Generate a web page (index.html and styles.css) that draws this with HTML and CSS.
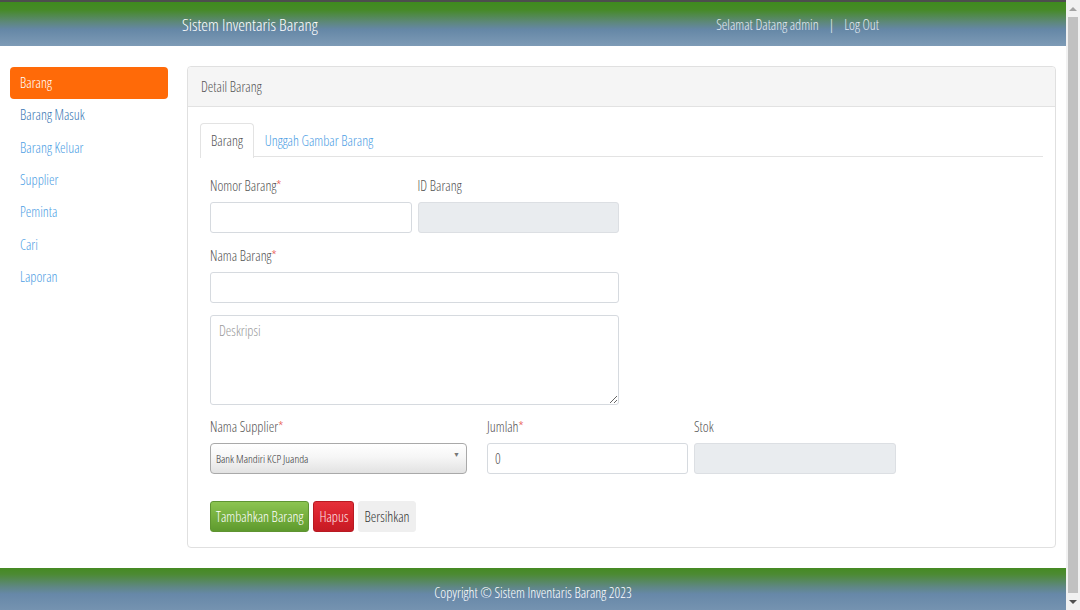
FILE: index.html
```html
<!DOCTYPE html>
<html lang="id">
<head>
<meta charset="utf-8">
<title>Sistem Inventaris Barang</title>
<link rel="stylesheet" href="styles.css">
</head>
<body>
<div class="page">
  <header class="navbar">
    <div class="nav-inner">
      <span class="brand">Sistem Inventaris Barang</span>
      <div class="nav-right">
        <span>Selamat Datang admin</span>
        <span class="sep">|</span>
        <a class="logout">Log Out</a>
      </div>
    </div>
  </header>

  <main class="main">
    <nav class="sidebar">
      <a class="side-item active">Barang</a>
      <a class="side-item hover">Barang Masuk</a>
      <a class="side-item">Barang Keluar</a>
      <a class="side-item">Supplier</a>
      <a class="side-item">Peminta</a>
      <a class="side-item">Cari</a>
      <a class="side-item">Laporan</a>
    </nav>

    <section class="panel">
      <div class="panel-head">Detail Barang</div>
      <div class="panel-body">
        <div class="tabs">
          <a class="tab active">Barang</a>
          <a class="tab">Unggah Gambar Barang</a>
        </div>
        <form class="form">
          <div class="row row-2">
            <div class="group">
              <label class="label">Nomor Barang<span class="req">*</span></label>
              <input class="input" type="text">
            </div>
            <div class="group">
              <label class="label">ID Barang</label>
              <input class="input" type="text" disabled>
            </div>
          </div>
          <div class="group wide">
            <label class="label">Nama Barang<span class="req">*</span></label>
            <input class="input" type="text">
          </div>
          <div class="group wide g-desc">
            <textarea class="input textarea" placeholder="Deskripsi"></textarea>
          </div>
          <div class="row row-3">
            <div class="group g-supplier">
              <label class="label">Nama Supplier<span class="req">*</span></label>
              <div class="select">Bank Mandiri KCP Juanda<span class="caret">▼</span></div>
            </div>
            <div class="group g-jumlah">
              <label class="label">Jumlah<span class="req">*</span></label>
              <input class="input" type="text" value="0">
            </div>
            <div class="group g-stok">
              <label class="label">Stok</label>
              <input class="input" type="text" disabled>
            </div>
          </div>
          <div class="actions">
            <button type="button" class="btn btn-green">Tambahkan Barang</button>
            <button type="button" class="btn btn-red">Hapus</button>
            <button type="button" class="btn btn-light">Bersihkan</button>
          </div>
        </form>
      </div>
    </section>
  </main>

  <footer class="footer">Copyright © Sistem Inventaris Barang 2023</footer>
</div>
<div class="scrollbar">
  <div class="sb-arrow sb-up"></div>
  <div class="sb-track"><div class="sb-thumb"></div></div>
  <div class="sb-arrow sb-down"></div>
</div>
</body>
</html>
```
FILE: styles.css
```css
html, body {
  margin: 0;
  height: 610px;
  overflow: hidden;
}
body {
  display: flex;
  font-family: "Open Sans", "Liberation Sans", sans-serif;
  font-stretch: 75%;
  font-weight: 350;
  font-size: 14px;
  color: #555;
  background: #fff;
}
.page {
  width: 1066px;
  display: flex;
  flex-direction: column;
}

/* navbar */
.navbar {
  height: 44px;
  border-top: 2px solid #4d4d4d;
  background: linear-gradient(to bottom, #3f8a1e 0%, #468a27 18%, #5d8878 45%, #6587a6 62%, #7e9bb6 100%);
}
.nav-inner {
  width: 700px;
  margin: 0 auto;
  height: 100%;
  display: flex;
  align-items: center;
  justify-content: space-between;
  box-sizing: border-box;
}
.brand {
  color: #fff;
  font-size: 17px;
  margin-left: -1px;
}
.nav-right {
  color: #e4ebf2;
  display: flex;
  align-items: center;
  gap: 10px;
  margin-right: 4px;
}
.sep { color: #eef3f8; }
.logout { color: #e4ebf2; }

/* main */
.main {
  flex: 1;
  display: flex;
  align-items: flex-start;
  padding: 20px 10px 0 10px;
}
.sidebar {
  width: 158px;
  display: flex;
  flex-direction: column;
  margin-top: 1px;
}
.side-item {
  height: 32.33px;
  line-height: 32px;
  padding-left: 10px;
  color: #4ea0e4;
  border-radius: 4px;
}
.side-item.hover { color: #3b78b4; }
.side-item.active {
  background: #ff6a08;
  color: #fff;
}

/* panel */
.panel {
  flex: 1;
  margin-left: 19px;
  border: 1px solid #e0e0e0;
  border-radius: 4px;
}
.panel-head {
  height: 39px;
  line-height: 40px;
  padding-left: 13px;
  background: #f5f5f5;
  border-bottom: 1px solid #e2e2e2;
  border-radius: 4px 4px 0 0;
}
.panel-body {
  padding: 16px 12px 15px 12px;
}
.tabs {
  display: flex;
  border-bottom: 1px solid #e3e3e3;
  height: 33px;
}
.tab {
  height: 33px;
  line-height: 33px;
  padding: 0 10px;
  color: #4ea0e4;
  border: 1px solid transparent;
  border-bottom: none;
  border-radius: 4px 4px 0 0;
}
.tab.active {
  color: #555;
  border-color: #e3e3e3;
  background: #fff;
  height: 34px;
}

/* form */
.form {
  padding: 19px 0 0 10px;
  display: flex;
  flex-direction: column;
}
.row { display: flex; }
.row-2 { gap: 6px; width: 409px; }
.row-2 .group { flex: 1; }
.group {
  display: flex;
  flex-direction: column;
  margin-bottom: 13px;
}
.wide { width: 409px; }
.g-desc { margin-top: -1px; }
.label {
  height: 20px;
  line-height: 19px;
  margin-bottom: 6px;
}
.req { color: #e53935; }
.input {
  box-sizing: border-box;
  height: 31px;
  border: 1px solid #d6dadf;
  border-radius: 3px;
  background: #fff;
  font: inherit;
  color: #555;
  padding: 0 7px;
  margin: 0;
  outline: none;
}
.input:disabled { background: #e9ecef; border-color: #dcdfe3; }
.textarea {
  height: 90px;
  padding: 5px 8px;
  resize: vertical;
  margin-bottom: -1px;
}
.textarea::placeholder { color: #9a9a9a; }
.g-supplier { width: 257px; margin-right: 20px; }
.g-jumlah { width: 201px; margin-right: 6px; }
.g-stok { width: 202px; }
.select {
  position: relative;
  box-sizing: border-box;
  height: 31px;
  line-height: 29px;
  border: 1px solid #a9a9a9;
  border-radius: 4px;
  padding-left: 5px;
  font-size: 11.2px;
  color: #333;
  background: linear-gradient(to bottom, #ffffff 0%, #f6f6f6 45%, #e2e2e2 100%);
}
.caret {
  position: absolute;
  right: 6px;
  top: -4px;
  font-size: 7px;
  color: #777;
}

.actions {
  display: flex;
  gap: 4px;
  margin-top: 14px;
}
.btn {
  height: 31px;
  border-radius: 3px;
  font: inherit;
  padding: 0 5px;
  border: 1px solid transparent;
  cursor: pointer;
}
.btn-green {
  color: #fff;
  background: linear-gradient(to bottom, #8cc450 0%, #73ad3c 55%, #5e9a2e 100%);
  border-color: #5f9432;
}
.btn-red {
  color: #fde4e6;
  background: linear-gradient(to bottom, #e5303a 0%, #d7212b 55%, #c51a24 100%);
  border-color: #b81a22;
}
.btn-light {
  color: #333;
  background: #efefef;
  border-color: #efefef;
}

/* footer */
.footer {
  height: 42px;
  margin-top: 19px;
  box-sizing: border-box;
  padding-top: 6px;
  display: flex;
  align-items: center;
  justify-content: center;
  color: #fff;
  background: linear-gradient(to bottom, #458a22 0%, #4c8a33 15%, #5f8784 45%, #6788a8 62%, #7593b0 100%);
}

/* fake window scrollbar */
.scrollbar {
  width: 14px;
  height: 610px;
  background: #f1f1f1;
  display: flex;
  flex-direction: column;
  align-items: center;
}
.sb-arrow {
  height: 17px;
  width: 14px;
  display: flex;
  align-items: center;
  justify-content: center;
}
.sb-up::before {
  content: "";
  border-left: 4px solid transparent;
  border-right: 4px solid transparent;
  border-bottom: 4px solid #a3a3a3;
}
.sb-down::before {
  content: "";
  border-left: 4px solid transparent;
  border-right: 4px solid transparent;
  border-top: 4px solid #505050;
}
.sb-track {
  flex: 1;
  width: 100%;
  display: flex;
  justify-content: center;
}
.sb-thumb {
  width: 10px;
  height: 100%;
  background: #c1c1c1;
}
```
